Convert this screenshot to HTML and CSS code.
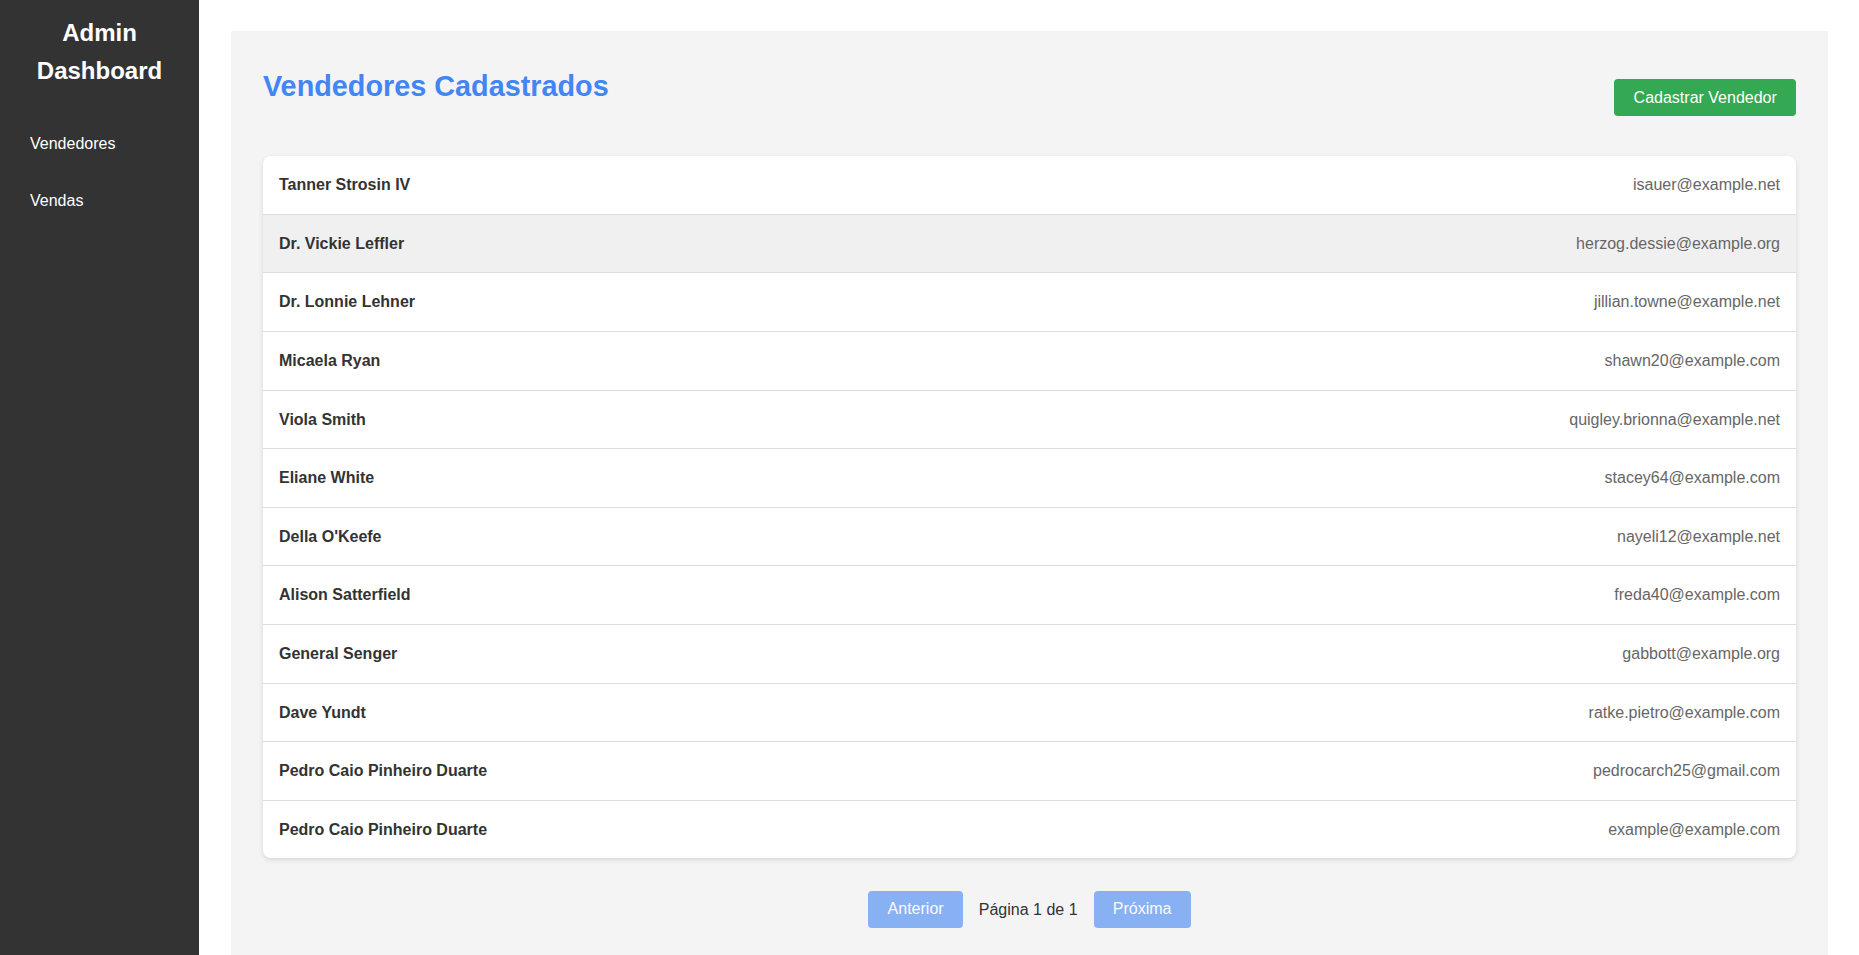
FILE: index.html
```html
<!DOCTYPE html>
<html lang="pt-BR">
<head>
<meta charset="UTF-8">
<title>Admin Dashboard</title>
<link rel="stylesheet" href="styles.css">
</head>
<body>
<div class="layout">
  <aside class="sidebar">
    <h2 class="brand">Admin Dashboard</h2>
    <ul class="nav">
      <li><a href="#">Vendedores</a></li>
      <li><a href="#">Vendas</a></li>
    </ul>
  </aside>
  <main class="main">
    <div class="header">
      <h2 class="title">Vendedores Cadastrados</h2>
      <button class="btn-add">Cadastrar Vendedor</button>
    </div>
    <ul class="list">
      <li class="row"><span class="name">Tanner Strosin IV</span><span class="email">isauer@example.net</span></li>
      <li class="row hover"><span class="name">Dr. Vickie Leffler</span><span class="email">herzog.dessie@example.org</span></li>
      <li class="row"><span class="name">Dr. Lonnie Lehner</span><span class="email">jillian.towne@example.net</span></li>
      <li class="row"><span class="name">Micaela Ryan</span><span class="email">shawn20@example.com</span></li>
      <li class="row"><span class="name">Viola Smith</span><span class="email">quigley.brionna@example.net</span></li>
      <li class="row"><span class="name">Eliane White</span><span class="email">stacey64@example.com</span></li>
      <li class="row"><span class="name">Della O'Keefe</span><span class="email">nayeli12@example.net</span></li>
      <li class="row"><span class="name">Alison Satterfield</span><span class="email">freda40@example.com</span></li>
      <li class="row"><span class="name">General Senger</span><span class="email">gabbott@example.org</span></li>
      <li class="row"><span class="name">Dave Yundt</span><span class="email">ratke.pietro@example.com</span></li>
      <li class="row"><span class="name">Pedro Caio Pinheiro Duarte</span><span class="email">pedrocarch25@gmail.com</span></li>
      <li class="row"><span class="name">Pedro Caio Pinheiro Duarte</span><span class="email">example@example.com</span></li>
    </ul>
    <div class="pagination">
      <button class="btn-page" disabled>Anterior</button>
      <span class="page-info">Página 1 de 1</span>
      <button class="btn-page" disabled>Próxima</button>
    </div>
  </main>
</div>
</body>
</html>
```
FILE: styles.css
```css
* {
  box-sizing: border-box;
}

html, body {
  margin: 0;
  padding: 0;
}

body {
  font-family: "Liberation Sans", Arial, sans-serif;
  font-size: 16px;
  line-height: 1.6;
  color: #333;
  background: #fff;
}

.layout {
  display: flex;
  min-height: 100vh;
}

.sidebar {
  width: 199px;
  flex-shrink: 0;
  background: #333;
  color: #fff;
  padding: 14px 20px;
}

.brand {
  margin: 0 0 24px;
  font-size: 24px;
  line-height: 1.6;
  font-weight: bold;
  text-align: center;
}

.nav {
  list-style: none;
  margin: 0;
  padding: 0;
}

.nav a {
  display: block;
  padding: 16px 10px;
  color: #fff;
  text-decoration: none;
}

.main {
  flex: 1;
  margin: 31px 31px 0 32px;
  padding: 32px;
  background: #f4f4f4;
}

.header {
  display: flex;
  justify-content: space-between;
  align-items: flex-start;
  margin-bottom: 40px;
}

.title {
  margin: 6px 0 0;
  font-size: 28.8px;
  line-height: 1.2;
  font-weight: bold;
  color: #4285f4;
}

.btn-add {
  margin-top: 16px;
  font-family: inherit;
  font-size: 16px;
  line-height: normal;
  padding: 0.6em 1.2em;
  border: none;
  border-radius: 4px;
  background: #34a853;
  color: #fff;
  cursor: pointer;
}

.list {
  list-style: none;
  margin: 0;
  padding: 0;
  background: #fff;
  border-radius: 8px;
  box-shadow: 0 2px 5px rgba(0, 0, 0, 0.12);
  overflow: hidden;
}

.row {
  display: flex;
  justify-content: space-between;
  padding: 16px;
  border-bottom: 1px solid #ddd;
}

.row:last-child {
  border-bottom: none;
}

.row.hover {
  background: #f0f0f0;
}

.name {
  font-weight: bold;
  color: #333;
}

.email {
  color: #666;
}

.pagination {
  display: flex;
  justify-content: center;
  align-items: center;
  gap: 16px;
  margin-top: 33px;
}

.btn-page {
  font-family: inherit;
  font-size: 16px;
  line-height: normal;
  padding: 0.57em 1.2em;
  border: none;
  border-radius: 4px;
  background: #4285f4;
  color: #fff;
  opacity: 0.6;
}

.page-info {
  color: #333;
}
```
